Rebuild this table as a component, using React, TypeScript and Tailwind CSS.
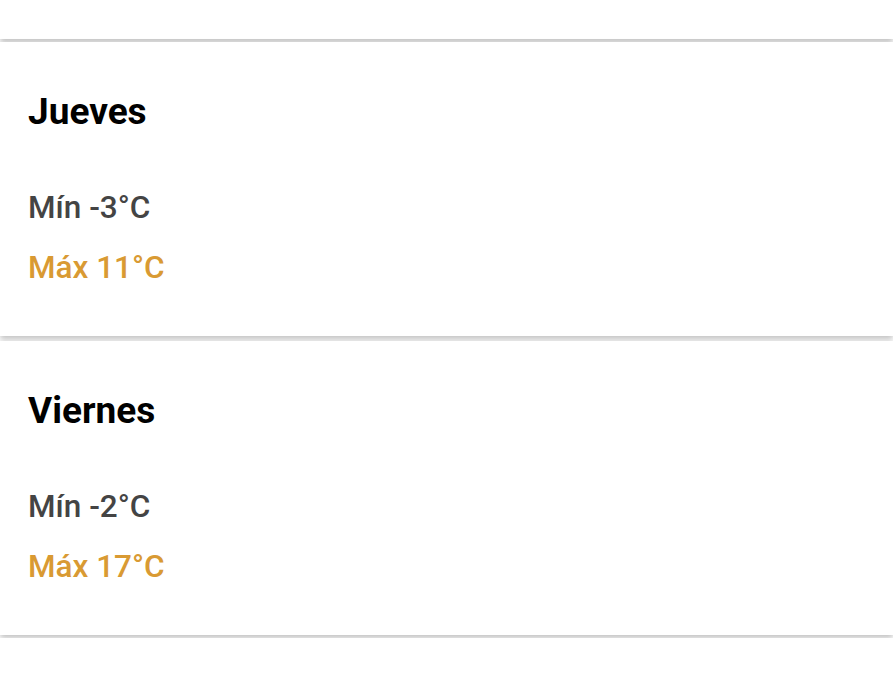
const days = [
  { name: "Jueves", min: -3, max: 11 },
  { name: "Viernes", min: -2, max: 17 },
]

function DayCard({ name, min, max }: { name: string; min: number; max: number }) {
  return (
    <div className="mb-[3px] bg-white px-7 pb-[52px] pt-[50px] shadow-[0_3px_6px_rgba(0,0,0,0.25)]">
      <h2 className="text-[37px] font-bold leading-[40px] text-black">{name}</h2>
      <p className="mt-[60px] text-[31.5px] font-medium leading-[32px] text-[#444444]">
        Mín {min}°C
      </p>
      <p className="mt-[28px] text-[31.5px] font-medium leading-[32px] text-[#d99a33]">
        Máx {max}°C
      </p>
    </div>
  )
}

export default function App() {
  return (
    <div className="min-h-screen overflow-hidden bg-white font-['Roboto',sans-serif]">
      <div className="mb-[3px] h-[39px] bg-white shadow-[0_3px_6px_rgba(0,0,0,0.25)]" />
      {days.map((d, i) => (
        <div key={d.name} className={i === 1 ? "pt-[2px]" : ""}>
          <DayCard {...d} />
        </div>
      ))}
      <div className="h-[60px] bg-white" />
    </div>
  )
}
